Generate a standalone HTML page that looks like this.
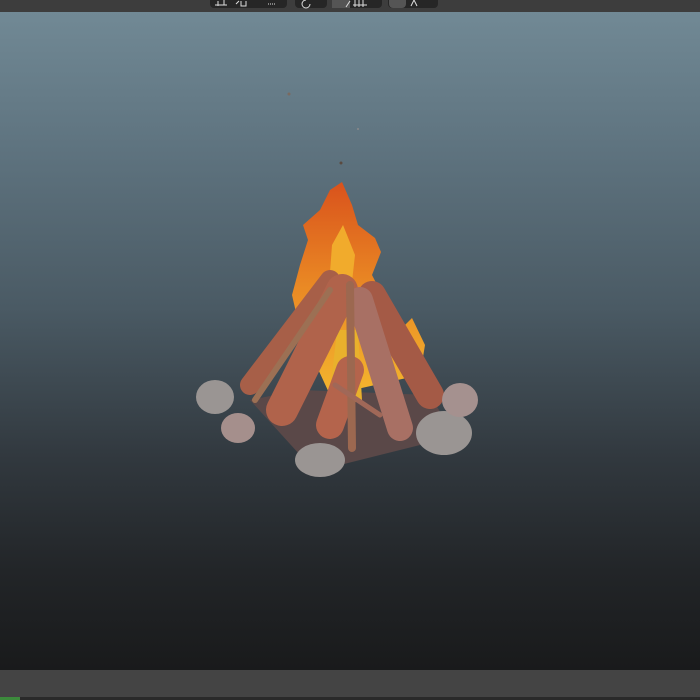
<!DOCTYPE html>
<html><head><style>
html,body{margin:0;padding:0;width:700px;height:700px;overflow:hidden;background:#1a1a1a;font-family:"Liberation Sans",sans-serif}
#top{position:absolute;left:0;top:0;width:700px;height:12px;background:#3d3d3d}
#vp{position:absolute;left:0;top:12px;width:700px;height:658px;background:linear-gradient(#718995 0%,#5f7480 20%,#4a5a64 45%,#31383e 68%,#222528 85%,#191a1b 100%)}
#bar{position:absolute;left:0;top:670px;width:700px;height:27px;background:#444}
#bot{position:absolute;left:0;top:697px;width:700px;height:3px;background:#2a2a2a}
.g{position:absolute;top:0;height:8px;background:#262626;border-radius:0 0 4px 4px}
</style></head><body>
<div id="top">
 <div class="g" style="left:210px;width:77px"></div>
 <div class="g" style="left:295px;width:32px"></div>
 <div class="g" style="left:332px;width:50px"></div>
 <div class="g" style="left:388px;width:50px"></div>
 <div style="position:absolute;left:332px;top:0;width:18px;height:8px;background:#555"></div>
 <div style="position:absolute;left:389px;top:0;width:17px;height:8px;background:#555;border-radius:0 0 4px 4px"></div>
 <svg width="700" height="12" style="position:absolute;left:0;top:0" fill="none" stroke="#ddd" stroke-width="1">
  <path d="M215 5h12M218 1v5M224 0v5"/><path d="M236 4l3-3M241 1v5h5V1"/><path d="M268 4h8" stroke-dasharray="1 1"/>
  <path d="M306 0a4 4 0 1 0 4 4"/><path d="M350 1l-4 6"/><path d="M353 5h14M355 0v7M359 0v7M363 0v7"/><path d="M411 6l3-6 3 6"/>
 </svg>
</div>
<div id="vp">
<svg width="700" height="658" viewBox="0 12 700 658" style="position:absolute;left:0;top:0">
 <defs>
  <linearGradient id="f" x1="0" y1="0" x2="0" y2="1"><stop offset="0" stop-color="#d9521c"/><stop offset=".5" stop-color="#ea8a24"/><stop offset="1" stop-color="#f3b52e"/></linearGradient>
 </defs>
 <circle cx="289" cy="94" r="1.5" fill="#7a6a60"/><circle cx="358" cy="129" r="1" fill="#8a8a8a"/><circle cx="341" cy="163" r="1.5" fill="#5a4a40"/>
 <polygon points="250,400 300,455 320,470 420,445 445,420 430,395 300,390" fill="#5a4848"/>
 <path d="M342 182 L352 205 L358 225 L375 238 L381 252 L372 275 L400 330 L412 318 L425 345 L420 375 L330 395 L300 330 L292 295 L300 265 L308 240 L303 225 L320 210 L330 190 Z" fill="url(#f)"/>
 <path d="M332 245 L343 225 L355 255 L350 300 L328 300 Z" fill="#f1ab2c"/>
 <polygon points="337,330 358,330 362,400 328,410" fill="#e9b12c"/>
 <g stroke-linecap="round" fill="none">
  <line x1="250" y1="385" x2="330" y2="280" stroke="#a75f48" stroke-width="20"/>
  <line x1="330" y1="425" x2="350" y2="370" stroke="#b4644c" stroke-width="28"/>
  <line x1="282" y1="410" x2="342" y2="290" stroke="#b0634b" stroke-width="32"/>
  <line x1="430" y1="395" x2="372" y2="295" stroke="#a45a46" stroke-width="28"/>
  <line x1="400" y1="428" x2="360" y2="300" stroke="#a87064" stroke-width="26"/>
  <line x1="255" y1="400" x2="330" y2="290" stroke="#9c7054" stroke-width="6"/>
  <line x1="352" y1="448" x2="350" y2="285" stroke="#9c6850" stroke-width="8"/>
  <line x1="335" y1="385" x2="380" y2="415" stroke="#a06858" stroke-width="5"/>
 </g>
 <g fill="#9a9593">
  <ellipse cx="215" cy="397" rx="19" ry="17"/>
  <ellipse cx="238" cy="428" rx="17" ry="15" fill="#a58f8c"/>
  <ellipse cx="320" cy="460" rx="25" ry="17"/>
  <ellipse cx="444" cy="433" rx="28" ry="22"/>
  <ellipse cx="460" cy="400" rx="18" ry="17" fill="#a5918f"/>
 </g>
</svg>
</div>
<div id="bar"></div>
<div id="bot"><div style="width:20px;height:3px;background:#3c8a3c"></div></div>
</body></html>
